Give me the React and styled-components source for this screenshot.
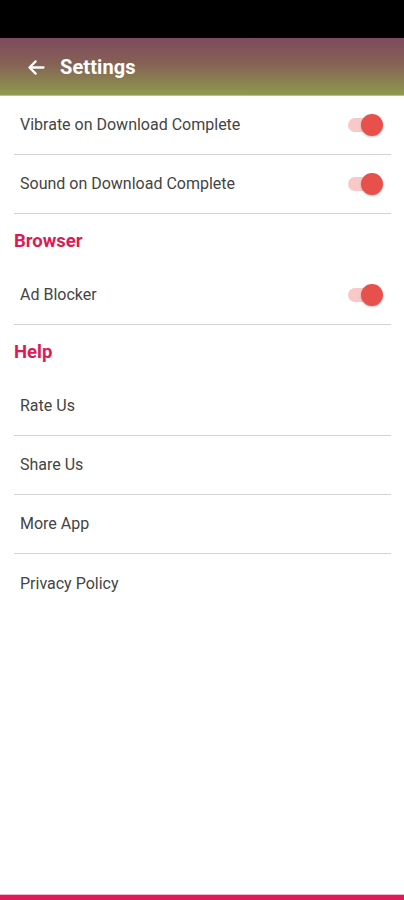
import React from 'react'
import styled, { createGlobalStyle } from 'styled-components';

const GlobalStyle = createGlobalStyle`
    html, body {
        margin: 0;
        padding: 0;
        background: #fff;
        font-family: Roboto, "Noto Sans", sans-serif;
    }
`;

const settings = [
    {
        title: null,
        items: [
            { label: 'Vibrate on Download Complete', toggle: true },
            { label: 'Sound on Download Complete', toggle: true },
        ],
    },
    {
        title: 'Browser',
        items: [{ label: 'Ad Blocker', toggle: true }],
    },
    {
        title: 'Help',
        items: [
            { label: 'Rate Us' },
            { label: 'Share Us' },
            { label: 'More App' },
            { label: 'Privacy Policy', last: true },
        ],
    },
];

function App() {
    return (
        <>
            <GlobalStyle />
            <Screen>
                <StatusBar />
                <Toolbar>
                    <BackButton aria-label="back">
                        <svg width="21" height="21" viewBox="0 0 24 24" fill="none" stroke="#fff" strokeWidth="2.6" strokeLinecap="round" strokeLinejoin="round">
                            <path d="M20 12H4.5" />
                            <path d="M11 5l-7 7 7 7" />
                        </svg>
                    </BackButton>
                    <Title>Settings</Title>
                </Toolbar>

                <List>
                    {settings.map((section, i) => (
                        <Section key={i}>
                            {section.title && <SectionTitle>{section.title}</SectionTitle>}
                            {section.items.map((item) => (
                                <Row key={item.label} $last={item.last}>
                                    <Label>{item.label}</Label>
                                    {item.toggle && (
                                        <Switch>
                                            <Knob />
                                        </Switch>
                                    )}
                                </Row>
                            ))}
                        </Section>
                    ))}
                </List>

                <BottomBar />
            </Screen>
        </>
    )
}

const Screen = styled.div`
    width: 404px;
    height: 900px;
    display: flex;
    flex-direction: column;
    background: #fff;
    overflow: hidden;
`;

const StatusBar = styled.div`
    height: 38px;
    background: #000;
    flex-shrink: 0;
`;

const Toolbar = styled.div`
    height: 58px;
    flex-shrink: 0;
    display: flex;
    align-items: center;
    padding-left: 24px;
    background: linear-gradient(180deg, #7e4a5d 0%, #856156 45%, #8e9a4c 100%);
    box-sizing: border-box;
    border-bottom: 1px solid #b9c08c;
`;

const BackButton = styled.div`
    width: 24px;
    height: 24px;
    display: flex;
    align-items: center;
    justify-content: center;
    margin-right: 12px;
    margin-top: 1px;
`;

const Title = styled.h1`
    margin: 0;
    color: #fff;
    font-size: 20px;
    font-weight: 700;
    letter-spacing: 0.1px;
    padding-top: 1px;
`;

const List = styled.div`
    flex: 1;
    display: flex;
    flex-direction: column;
    padding: 0 13px 0 14px;
`;

const Section = styled.div`
    display: flex;
    flex-direction: column;
`;

const SectionTitle = styled.div`
    height: 52px;
    display: flex;
    align-items: center;
    color: #dd1a55;
    font-size: 18.5px;
    font-weight: 700;
    padding-top: 2px;
    box-sizing: border-box;
`;

const Row = styled.div`
    height: 59px;
    display: flex;
    align-items: center;
    justify-content: space-between;
    padding: 0 9px 0 6px;
    box-sizing: border-box;
    border-bottom: ${({ $last }) => ($last ? 'none' : '1.5px solid #d3d3d3')};
`;

const Label = styled.span`
    font-size: 16px;
    color: #444;
    margin-top: -1px;
`;

const Switch = styled.div`
    position: relative;
    width: 34px;
    height: 14px;
    border-radius: 7px;
    background: #f8c9c7;
`;

const Knob = styled.span`
    position: absolute;
    right: -1px;
    top: 50%;
    width: 22px;
    height: 22px;
    margin-top: -11px;
    border-radius: 50%;
    background: #e8504c;
    box-shadow: 0 1px 2px rgba(0, 0, 0, 0.25);
`;

const BottomBar = styled.div`
    height: 5px;
    flex-shrink: 0;
    background: #e0195a;
    border-top: 1px solid #f3b5c8;
`;

export default App;
